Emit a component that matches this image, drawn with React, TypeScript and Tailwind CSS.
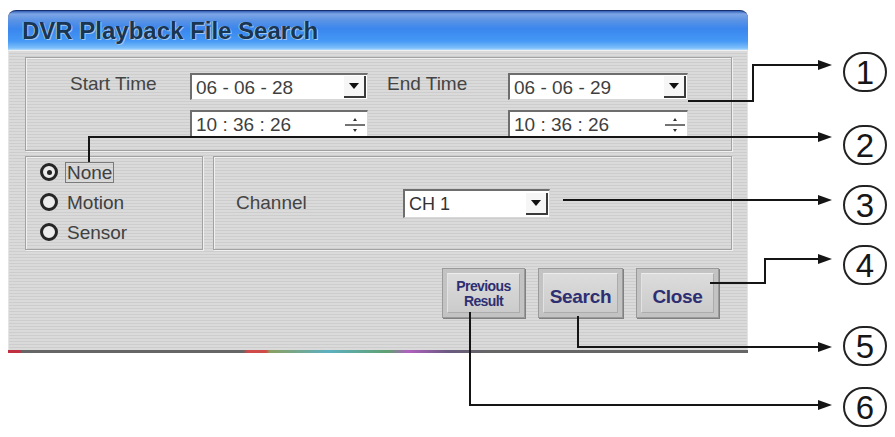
import React from "react";

const labelFont = { fontFamily: '"Liberation Sans", Arial, sans-serif' };

const DropArrow = () => (
  <div className="w-[22px] h-[22px] mr-[1px] bg-[#f6f6f6] border-r-2 border-b-2 border-[#3a3a3a] flex items-center justify-center">
    <svg width="10" height="6" viewBox="0 0 10 6">
      <polygon points="0,0 10,0 5,6" fill="#111" />
    </svg>
  </div>
);

const Spinner = () => (
  <div className="w-[22px] h-[24px] mr-[1px] flex items-center justify-center">
    <svg width="22" height="22" viewBox="0 0 22 22">
      <polygon points="9,7 13,7 11,4" fill="#333" />
      <line x1="1" y1="11" x2="21" y2="11" stroke="#444" strokeWidth="1.5" />
      <polygon points="9,15 13,15 11,18" fill="#333" />
    </svg>
  </div>
);

const DateBox = ({ value, spin, w }: { value: string; spin?: boolean; w: string }) => (
  <div className={`${w} ${spin ? "h-[28px]" : "h-[27px]"} bg-white border-t-2 border-l-2 border-[#6e6e6e] border-r border-b border-r-[#d8d8d8] border-b-[#d8d8d8] flex items-center justify-between`}>
    <span className="pl-[4px] text-[19px] text-[#3f3f3f] leading-none">{value}</span>
    {spin ? <Spinner /> : <DropArrow />}
  </div>
);

const Radio = ({ label, checked }: { label: string; checked?: boolean }) => (
  <div className="h-[30px] flex items-center pl-[14px]">
    <div className="w-[18px] h-[18px] rounded-full border-[3px] border-[#262626] bg-[#ececec] flex items-center justify-center">
      {checked && <div className="w-[5px] h-[5px] rounded-full bg-[#222]" />}
    </div>
    <span className={`ml-[7px] px-[1px] border leading-[19px] text-[19px] text-[#404040] ${checked ? "border-[#7a7a7a]" : "border-transparent"}`}>{label}</span>
  </div>
);

const Btn = ({ w, children, pt }: { w: string; children: React.ReactNode; pt: string }) => (
  <div className={`${w} h-[50px] border border-[#9a9a9a] bg-[#c3c3c3] p-[4px] shadow-[1px_1px_0_#808080]`}>
    <div className={`h-full border border-[#acacac] border-t-[#ededed] border-l-[#e2e2e2] bg-[linear-gradient(to_bottom,#dcdcdc,#cbcbcb)] flex justify-center text-center font-bold text-[#2e2e72] ${pt}`}>
      {children}
    </div>
  </div>
);

const callouts = [
  { n: "1", top: "top-[52px]" },
  { n: "2", top: "top-[125px]" },
  { n: "3", top: "top-[185px]" },
  { n: "4", top: "top-[245px]" },
  { n: "5", top: "top-[326px]" },
  { n: "6", top: "top-[387px]" },
];

const arrowYs = [65, 137, 200, 259, 347, 405];

export default function App() {
  const groupBox = "border border-[#a2a2a2] shadow-[inset_1px_1px_0_#f0f0f0,1px_1px_0_#f0f0f0]";
  return (
    <div className="relative w-[895px] h-[437px] bg-white overflow-hidden" style={labelFont}>
      {/* dialog */}
      <div className="ml-[8px] pt-[10px] w-[740px]">
        <div className="h-[40px] rounded-t-[8px] border-t border-[#16306e] bg-[linear-gradient(to_bottom,#3360b8_0px,#7ea6e6_3px,#5c93e4_9px,#3a86ee_18px,#4598f5_30px,#7cbffa_37px,#b6dcfb_39px)] flex items-center pl-[14px] pt-[1px]">
          <span className="text-[24px] font-bold leading-none text-[#183553] [text-shadow:1px_1px_0_#9fc6ee,-1px_0_0_#9fc6ee]">
            DVR Playback File Search
          </span>
        </div>
        <div className="h-[300px] border-x border-[#e4e4e4] border-t border-t-[#f0f0f0] pl-[16px] pr-[15px] pt-[6px] bg-[repeating-linear-gradient(to_bottom,#dadada_0px,#dadada_2px,#cdcdcd_2px,#cdcdcd_3px)]">
          {/* time group */}
          <div className={`h-[94px] ${groupBox} flex pl-[44px] pt-[15px]`}>
            <div className="w-[120px] h-[27px] leading-[22px] text-[19px] text-[#444]">Start Time</div>
            <div className="flex flex-col gap-[10px]">
              <DateBox w="w-[178px]" value="06 - 06 - 28" />
              <DateBox w="w-[178px]" value="10 : 36 : 26" spin />
            </div>
            <div className="ml-[19px] w-[121px] h-[27px] leading-[22px] text-[19px] text-[#444]">End Time</div>
            <div className="flex flex-col gap-[10px]">
              <DateBox w="w-[180px]" value="06 - 06 - 29" />
              <DateBox w="w-[180px]" value="10 : 36 : 26" spin />
            </div>
          </div>

          <div className="mt-[5px] flex gap-[10px]">
            <div className={`w-[178px] h-[94px] ${groupBox}`}>
              <Radio label="None" checked />
              <Radio label="Motion" />
              <Radio label="Sensor" />
            </div>
            <div className={`flex-1 h-[94px] ${groupBox} flex items-center pl-[22px]`}>
              <div className="w-[167px] text-[19px] text-[#444]">Channel</div>
              <div className="w-[147px] h-[29px] bg-white border-t-2 border-l-2 border-[#6e6e6e] border-r border-b border-r-[#d8d8d8] border-b-[#d8d8d8] flex items-center justify-between">
                <span className="pl-[4px] text-[18px] text-[#333] leading-none">CH 1</span>
                <DropArrow />
              </div>
            </div>
          </div>

          <div className="mt-[18px] flex justify-end gap-[13px] pr-[13px]">
            <Btn w="w-[83px]" pt="pt-[5px]">
              <span className="text-[14px] leading-[15px] tracking-[-0.6px]">Previous<br />Result</span>
            </Btn>
            <Btn w="w-[85px]" pt="pt-[12px]">
              <span className="text-[19px] leading-[22px] tracking-[-0.3px]">Search</span>
            </Btn>
            <Btn w="w-[83px]" pt="pt-[12px]">
              <span className="text-[19px] leading-[22px] tracking-[-0.3px]">Close</span>
            </Btn>
          </div>
        </div>
        <div className="h-[3px] bg-[linear-gradient(to_right,#c03040_0px,#c03040_12px,#666_14px,#666_235px,#d04a4a_240px,#d04a4a_258px,#8aa060_262px,#5cb0c0_320px,#60a070_380px,#b060c0_400px,#6a5a80_440px,#666_480px,#666_740px)]" />
      </div>

      {/* callout lines */}
      <svg className="absolute left-0 top-0 pointer-events-none" width="895" height="437" viewBox="0 0 895 437">
        <g stroke="#151515" strokeWidth="2" fill="none">
          <polyline points="688,101 753,101 753,65 822,65" />
          <polyline points="89,162 89,137 822,137" />
          <polyline points="563,200 822,200" />
          <polyline points="710,283 765,283 765,259 822,259" />
          <polyline points="578,316 578,347 822,347" />
          <polyline points="470,312 470,405 822,405" />
        </g>
        {arrowYs.map((y) => (
          <polygon key={y} points={`818,${y - 5} 832,${y} 818,${y + 5}`} fill="#151515" />
        ))}
      </svg>

      {callouts.map((c) => (
        <div
          key={c.n}
          className={`absolute left-[843px] ${c.top} w-[44px] h-[40px] rounded-full border-2 border-[#222] flex items-center justify-center text-[33px] leading-none text-[#161616]`}
        >
          {c.n}
        </div>
      ))}
    </div>
  );
}
